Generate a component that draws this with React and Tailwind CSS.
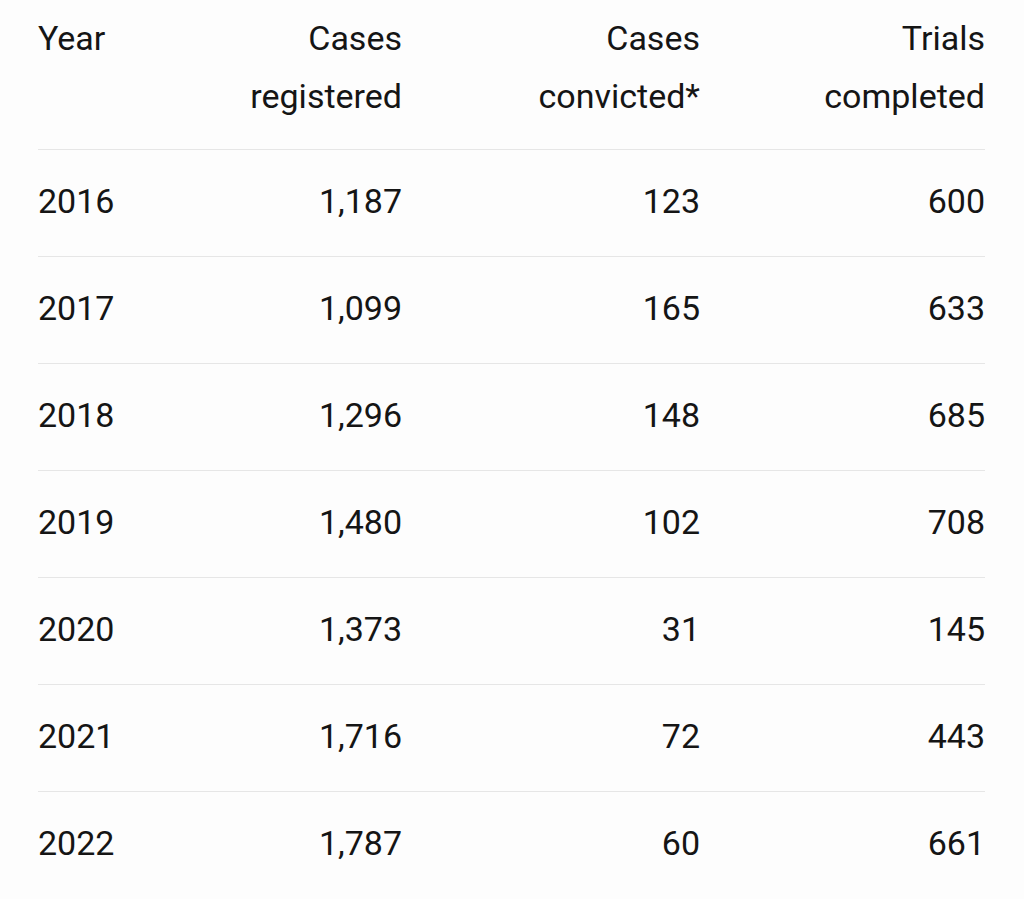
export default function App() {
  const rows = [
    ["2016", "1,187", "123", "600"],
    ["2017", "1,099", "165", "633"],
    ["2018", "1,296", "148", "685"],
    ["2019", "1,480", "102", "708"],
    ["2020", "1,373", "31", "145"],
    ["2021", "1,716", "72", "443"],
    ["2022", "1,787", "60", "661"],
  ];
  return (
    <div
      className="w-[1024px] h-[899px] overflow-hidden bg-[#fdfdfd] text-[#151515] pl-[38px] pr-[39px]"
      style={{ fontFamily: "Roboto, 'Noto Sans', sans-serif" }}
    >
      <div className="grid grid-cols-[150px_214px_298px_285px] text-[34px] leading-[58px] pt-[9px] pb-[24px] border-b border-[#e6e6e6]">
        <div className="text-left">Year</div>
        <div className="text-right">Cases<br />registered</div>
        <div className="text-right">Cases<br />convicted*</div>
        <div className="text-right">Trials<br />completed</div>
      </div>
      {rows.map((r, i) => (
        <div
          key={r[0]}
          className={`grid grid-cols-[150px_214px_298px_285px] items-center h-[107px] pb-[4px] text-[34px] ${i < rows.length - 1 ? "border-b border-[#e6e6e6]" : ""}`}
        >
          <div className="text-left">{r[0]}</div>
          <div className="text-right">{r[1]}</div>
          <div className="text-right">{r[2]}</div>
          <div className="text-right">{r[3]}</div>
        </div>
      ))}
    </div>
  );
}
